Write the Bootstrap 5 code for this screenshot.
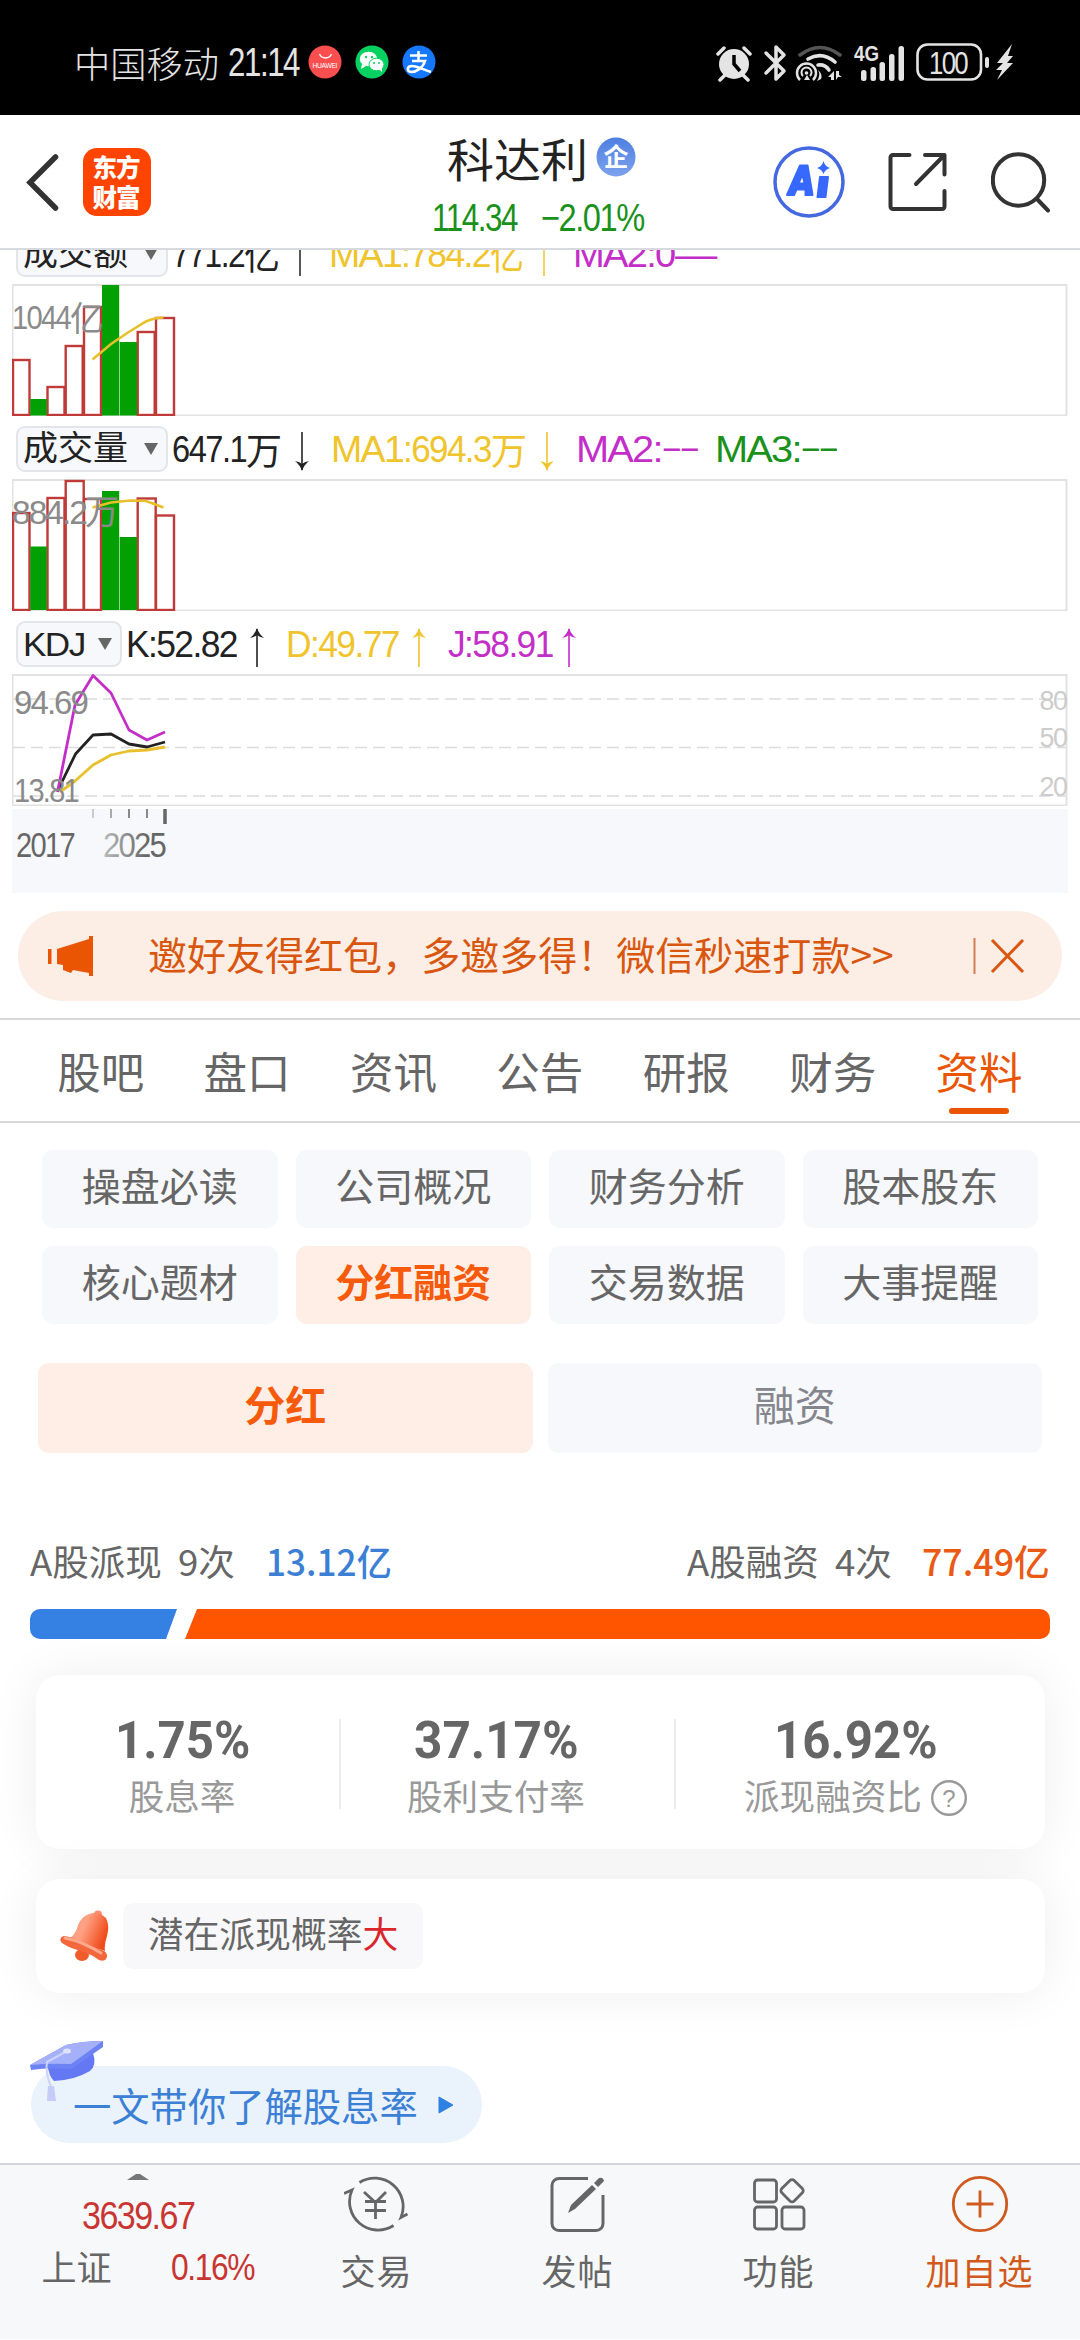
<!DOCTYPE html>
<html lang="zh-CN">
<head>
<meta charset="utf-8">
<meta name="viewport" content="width=device-width, initial-scale=1">
<title>科达利 - 分红融资</title>
<link href="https://cdn.jsdelivr.net/npm/bootstrap@5.3.0/dist/css/bootstrap.min.css" rel="stylesheet">
<style>
:root{--han:"Noto Sans CJK SC",sans-serif;--num:"Liberation Sans","Noto Sans CJK SC",sans-serif;--org:#ea5504}
body{width:1080px;height:2340px;overflow:hidden;background:#fff;font-family:var(--han);color:#666;line-height:1}
svg{display:block;flex:none}
svg text{font-family:var(--num)}
.fit{display:inline-block;white-space:nowrap;flex:none;text-align:left}
.fit>span{display:inline-block;transform-origin:0 50%}
.num{font-family:var(--num)}
.num.fit,.num .fit{letter-spacing:-.045em}
.statusbar{height:115px;background:#000;color:#e4e4e4;padding:9px 66px 0 74px}
.statusbar .carrier{font-size:36px;font-weight:300}
.statusbar .clock{font-size:40px;margin-left:9px}
.apphead{height:135px;border-bottom:2px solid #d6dade;padding:0 27px 0 26px}
.quote{width:220px;padding-top:17px;margin-left:276px}
.quote .stock{font-size:46px;color:#222;height:50px}
.quote .price{font-size:38px;color:#1a911a;height:40px;margin:17px 0 0 5px}
.charts{height:643px;overflow:hidden;padding:0 12px}
.charts .inner{margin-top:-29px}
.indrow{height:63px;padding:10px 0 0 4px;font-size:37px;color:#222}
.indrow>.fit{margin-top:-6px}
.indrow>.arr{margin-top:-2px}
.pick{height:46px;background:#f7f8fb;border:2px solid #e3e5ea;border-radius:9px;font-size:34px;color:#222;padding:0 8px 0 5px;margin:-8px 4px 0 0}
.pick .fit{margin-top:-5px}
.pick i{border:7.5px solid transparent;border-top:12px solid #666;border-bottom:0}
.arr{margin:0 22px 0 13px}
.cy{color:#efc42c}.cm{color:#c42ec8}.cg{color:#1a911a}
.axis{background:#f7f8fb;margin-top:3px}
.notice{height:90px;margin:18px 18px 17px;border-radius:45px;background:#fceee5;color:#d9560f;padding:0 37px 0 29px}
.notice .msg{font-size:38.5px;margin:-5px 0 0 54px}
.tabs{height:105px;border-top:2px solid #d8d8d8;border-bottom:2px solid #d8d8d8;padding:0 27.5px}
.tabs a{font-size:43.5px;color:#666;text-decoration:none;width:146.4px;height:101px;position:relative}
.tabs a.active{color:var(--org)}
.tabs a.active:after{content:"";position:absolute;left:43px;bottom:7px;width:60px;height:6px;border-radius:3px;background:var(--org)}
.tags{display:grid;grid-template-columns:repeat(4,1fr);gap:18px;padding:27px 42px 0}
.tags a,.seg a{background:#f7f8fb;border-radius:11px;height:78px;font-size:39px;color:#666;text-decoration:none;padding-bottom:9px}
.tags a.active,.seg a.active{background:#ffeee5;color:#f65a0a;font-weight:700}
.seg{gap:15px;padding:39px 38px 0}
.seg a{height:90px;font-size:41px;color:#85858d;padding-bottom:10px}
.sum{margin-top:83px;height:48px;padding:0 30px;font-size:36px}
.splitbar{margin:25px 30px 0}
.panel{margin:0 35px 0 36px;border-radius:24px;background:#fff;box-shadow:0 0 50px rgba(0,0,0,.07);position:relative}
.p1{height:174px;margin-top:36px;padding-top:3px}
.stat{height:90px}
.stat+.stat{border-left:2px solid #ececec}
.stat b{font-family:Roboto,sans-serif;font-weight:700;font-size:51px;height:42px;line-height:44px;margin-bottom:14px}
.stat small{font-size:35.6px;color:#999;height:40px;line-height:40px}
.p2{height:114px;margin-top:30px;padding-left:24px}
.chip{background:#f8f8fb;border-radius:10px;height:66px;width:300px;font-size:35.8px;padding-bottom:6px;margin-left:14px}
.chip em{color:#d9262c;font-style:normal}
.learn{height:77px;width:451px;margin:73px 0 0 31px;border-radius:39px;background:#eaf2fc;color:#3b80d5;font-size:38.3px;position:relative;padding:1px 0 0 42px}
.learn .hat{position:absolute;left:-2px;top:-26px}
.learn .tri{margin-left:20px}
.dock{height:176px;border-top:2px solid #d5d5de;background:#f7f8fa;margin-top:20px}
.dock .idx{width:276px;padding-top:8px}
.dock .cell{width:201px;font-size:35px;padding-top:9px}
.dock .cell span{margin-top:16px;line-height:40px;letter-spacing:1px}
.red{color:#c93532}
</style>
</head>
<body class="d-flex flex-column">

<div class="statusbar d-flex align-items-center">
  <span class="fit carrier" data-w="145">中国移动</span>
  <span class="fit num clock" data-w="71">21:14</span>
  <svg class="ms-2 ps-0" width="130" height="36" viewBox="-1 0 130 36">
    <circle cx="17" cy="18" r="16.5" fill="#fb4e4f"/><path d="M11.500 10a6.500 6.500 0 0 0 12 0" fill="none" stroke="#fff" stroke-width="1.300"/>
    <text x="4.500" y="23.500" font-size="6.800" fill="#fff" textLength="25">HUAWEI</text>
    <circle cx="64" cy="18" r="16.500" fill="#07d160"/>
    <ellipse cx="60.500" cy="15" rx="8.700" ry="7.300" fill="#fff"/><path d="M54 20l-1 5 5-3z" fill="#fff"/>
    <ellipse cx="68.500" cy="20.500" rx="7.500" ry="6.300" fill="#fff" stroke="#07d160"/><path d="M71 25l3 3v-4z" fill="#fff"/>
    <g fill="#07d160"><circle cx="58" cy="13" r="1.200"/><circle cx="64" cy="13" r="1.200"/><circle cx="66" cy="19" r="1"/><circle cx="71" cy="19" r="1"/></g>
    <circle cx="111" cy="18" r="16.500" fill="#1677ff"/>
    <path d="M102 11.500h17M110.500 7v10M104 17h13C115 24 108 28 103.500 28c-5 0-5-6 .5-6 5 0 12 4 19 6" fill="none" stroke="#fff" stroke-width="2.600"/>
  </svg>
  <svg class="ms-auto" width="300" height="40" viewBox="713 41 300 40" fill="#e4e4e4" stroke="none">
    <circle cx="733" cy="63" r="15"/><path d="M733 54v9l6 7" stroke="#000" stroke-width="3.500" fill="none"/>
    <path d="M717 53l6-6M743 47l6 6M719 79l5-5M747 79l-5-5" stroke="#e4e4e4" stroke-width="3.500" stroke-linecap="round"/>
    <path d="M765 52l18 18-8 8V46l8 8-18 18" fill="none" stroke="#e4e4e4" stroke-width="3.500" stroke-linejoin="round" stroke-linecap="round"/>
    <g fill="none" stroke="#e4e4e4" stroke-width="3.600"><path d="M799 54q20-15 40 0" stroke="#555" stroke-linecap="round"/><path d="M807 58q14-8 27 3M817 64q7-1 11 5" stroke-linecap="round"/>
    <path d="M799 79a9.500 9.500 0 1 1 13 0" stroke-width="2.500"/><path d="M802 75a5 5 0 1 1 7 0" stroke-width="2"/></g>
    <circle cx="805.500" cy="72" r="1.800"/><path d="M806 74l3 5h-6zM817 69q5 4 3 9l-4 2q4-6 1-11zM827 76l6-6v9h-3v-3zM835 70v9l2-3h4l-3-2v-4z"/>
    <text x="853" y="60" font-size="22" font-weight="700" textLength="25" lengthAdjust="spacingAndGlyphs">4G</text>
    <rect x="860" y="69" width="5.500" height="11" rx="2.500"/><rect x="869.500" y="66" width="5.500" height="14" rx="2.500"/><rect x="878.500" y="61" width="5.500" height="19" rx="2.500"/><rect x="888" y="53" width="5.500" height="27" rx="2.500"/><rect x="897.500" y="45" width="5.500" height="35" rx="2.500"/>
    <rect x="916.500" y="43.500" width="63.500" height="35" rx="10" fill="none" stroke="#e4e4e4" stroke-width="2.600"/><rect x="984" y="56" width="4" height="11" rx="2"/>
    <text x="928" y="72.500" font-size="31" textLength="38" lengthAdjust="spacingAndGlyphs" letter-spacing="-2">100</text>
    <path d="M1011 43l-15 19h6l-7 7h6l-5 10 16-17h-6l6-7h-5z"/>
  </svg>
</div>

<header class="apphead d-flex align-items-center">
  <svg width="34" height="58" viewBox="0 0 34 58"><path d="M29.500 4L4 29.500 29.500 55" fill="none" stroke="#333" stroke-width="5.500" stroke-linecap="round"/></svg>
  <svg style="margin-left:23px" width="68" height="68" viewBox="0 0 68 68"><rect width="68" height="68" rx="14" fill="#ff4400"/>
    <g font-size="24.500" font-weight="900" fill="#fff"><text x="9.500" y="28.500" textLength="48">东方</text><text x="9.500" y="59" textLength="48">财富</text></g></svg>
  <div class="quote align-self-start">
    <div class="stock d-flex align-items-center ms-3 ps-1"><span class="fit" data-w="141">科达利</span>
      <svg class="ms-2" width="40" height="40" viewBox="0 0 40 40"><defs><linearGradient id="qi" x2="0" y2="1"><stop stop-color="#4f7fe3"/><stop offset="1" stop-color="#7da2ec"/></linearGradient></defs><circle cx="20" cy="20" r="19.500" fill="url(#qi)"/><text x="7.500" y="29" font-size="25" font-weight="700" fill="#fff">企</text></svg></div>
    <div class="price num d-flex"><span class="fit" data-w="85">114.34</span><span class="fit" style="margin-left:24px" data-w="103">−2.01%</span></div>
  </div>
  <svg style="margin-left:126px" width="72" height="74" viewBox="0 0 72 74"><circle cx="36" cy="37" r="34" fill="none" stroke="#4368e0" stroke-width="3.500"/>
    <path fill="#3768ff" fill-rule="evenodd" stroke="#3768ff" stroke-width="2" stroke-linejoin="round" d="M27 20.500h7.500L39.500 50h-7v-5.500H23.500L21 50h-7zM29.500 29L25.500 38.500h6zM47 32h8L52.500 52h-8z"/><path d="M50.500 16q1.500 5.500 6.500 7-5 1.500-6.500 6-1.500-4.500-6.500-6 5-1.500 6.500-7z" fill="#3768ff"/></svg>
  <svg style="margin-left:43px" width="60" height="60" viewBox="0 0 60 60" fill="none" stroke="#333" stroke-width="4" stroke-linecap="round" stroke-linejoin="round"><path d="M21.500 3H5a2.500 2.500 0 0 0-2.500 2.500v49A2.500 2.500 0 0 0 5 57h49a2.500 2.500 0 0 0 2.500-2.500V39M37 3h19.500v19.500M55.500 4L28 32"/></svg>
  <svg class="ms-auto" width="62" height="62" viewBox="0 0 62 62" fill="none" stroke="#333" stroke-width="4" stroke-linecap="round"><circle cx="27.500" cy="29" r="25.700"/><path d="M46 48l11 11.500"/></svg>
</header>

<section class="charts"><div class="inner">
  <div class="indrow d-flex align-items-center">
    <div class="pick d-flex align-items-center"><span class="fit" data-w="105">成交额</span><i class="ms-3"></i></div>
    <span class="fit num" data-w="72">771.2</span><span class="fit" data-w="36">亿</span>
    <svg class="arr" width="14" height="40" viewBox="0 0 14 40"><path d="M7 1v38M0 11q6-4 7-10 1 6 7 10" fill="none" stroke="#222" stroke-width="1.500"/></svg>
    <span class="fit num cy" data-w="72">MA1</span><span class="fit num cy" data-w="89">:784.2</span><span class="fit cy" data-w="34">亿</span>
    <svg class="arr" width="14" height="40" viewBox="0 0 14 40"><path d="M7 1v38" stroke="#efc42c" stroke-width="1.500"/></svg>
    <span class="fit num cm" data-w="102">MA2:0</span><span class="fit num cm" data-w="40">—</span>
  </div>
  <svg width="1056" height="132" viewBox="12 284 1056 132">
    <rect x="12.500" y="285" width="1054" height="130.500" fill="none" stroke="#e2e2e2" stroke-width="2"/>
    <g fill="#fff" stroke="#bf3a38" stroke-width="2.400"><rect x="13" y="360" width="16.500" height="55"/><rect x="47.500" y="387" width="17" height="28"/><rect x="65.700" y="346" width="17" height="69"/><rect x="84" y="307" width="17" height="108"/><rect x="137.700" y="332" width="17" height="83"/><rect x="156" y="318" width="18" height="97"/></g>
    <g fill="#03a003"><rect x="30.300" y="399" width="16.500" height="16.500"/><rect x="102" y="285" width="17.200" height="130.500"/><rect x="119.700" y="342" width="17.300" height="73.500"/></g>
    <path d="M92.500 359.500L111 344 128 332.500 146 321.500Q155 317.500 163.500 317.500" fill="none" stroke="#e8c02c" stroke-width="2.600"/>
    <g fill="#8a8a8a"><text x="12" y="329" font-size="34" textLength="58" lengthAdjust="spacingAndGlyphs" letter-spacing="-2">1044</text><text x="70" y="331" font-size="34">亿</text></g>
  </svg>
  <div class="indrow d-flex align-items-center">
    <div class="pick d-flex align-items-center"><span class="fit" data-w="105">成交量</span><i class="ms-3"></i></div>
    <span class="fit num" data-w="74">647.1</span><span class="fit" data-w="36">万</span>
    <svg class="arr" width="14" height="40" viewBox="0 0 14 40"><path d="M7 0v38" stroke="#222" stroke-width="1.600"/><path d="M0 29q5 1 7 3 2-2 7-3-5 4-7 10-2-6-7-10z" fill="#222"/></svg>
    <span class="fit num cy" data-w="72">MA1</span><span class="fit num cy" data-w="88">:694.3</span><span class="fit cy" data-w="36">万</span>
    <svg class="arr" width="14" height="40" viewBox="0 0 14 40"><path d="M7 0v38" stroke="#efc42c" stroke-width="1.600"/><path d="M0 29q5 1 7 3 2-2 7-3-5 4-7 10-2-6-7-10z" fill="#efc42c"/></svg>
    <span class="fit num cm" data-w="86">MA2:</span><span class="fit num cm" data-w="36">−−</span>
    <span class="fit num cg" style="margin-left:17px" data-w="86">MA3:</span><span class="fit num cg" data-w="36">−−</span>
  </div>
  <svg width="1056" height="132" viewBox="12 479 1056 132">
    <rect x="12.500" y="480" width="1054" height="130.500" fill="none" stroke="#e2e2e2" stroke-width="2"/>
    <g fill="#fff" stroke="#bf3a38" stroke-width="2.400"><rect x="13" y="513" width="16.500" height="97"/><rect x="47.500" y="498" width="17" height="112"/><rect x="65.700" y="481" width="18" height="129"/><rect x="84" y="499" width="17" height="111"/><rect x="137.700" y="498.500" width="18" height="111.500"/><rect x="156" y="515.500" width="18" height="94.500"/></g>
    <g fill="#03a003"><rect x="30.300" y="546.500" width="16.500" height="63.500"/><rect x="102" y="491" width="17.200" height="119"/><rect x="119.700" y="537" width="17.300" height="73"/></g>
    <path d="M92.500 507.500L111 502.500 130 500.500 146 501 163.500 507.500" fill="none" stroke="#e8c02c" stroke-width="2.600"/>
    <g fill="#8a8a8a"><text x="12" y="523.500" font-size="34" textLength="74" lengthAdjust="spacingAndGlyphs" letter-spacing="-2">884.2</text><text x="85" y="524" font-size="34">万</text></g>
  </svg>
  <div class="indrow d-flex align-items-center">
    <div class="pick d-flex align-items-center"><span class="fit num mt-0" data-w="62">KDJ</span><i style="margin-left:13px"></i></div>
    <span class="fit num" data-w="111">K:52.82</span>
    <svg class="arr" width="14" height="40" viewBox="0 0 14 40"><path d="M7 2v38" stroke="#222" stroke-width="1.600"/><path d="M0 11q5-1 7-3 2 2 7 3-5-4-7-10-2 6-7 10z" fill="#222"/></svg>
    <span class="fit num cy" data-w="113">D:49.77</span>
    <svg class="arr" width="14" height="40" viewBox="0 0 14 40"><path d="M7 2v38" stroke="#efc42c" stroke-width="1.600"/><path d="M0 11q5-1 7-3 2 2 7 3-5-4-7-10-2 6-7 10z" fill="#efc42c"/></svg>
    <span class="fit num cm" data-w="105">J:58.91</span>
    <svg class="arr" width="14" height="40" viewBox="0 0 14 40" style="margin-left:9px"><path d="M7 2v38" stroke="#c42ec8" stroke-width="1.600"/><path d="M0 11q5-1 7-3 2 2 7 3-5-4-7-10-2 6-7 10z" fill="#c42ec8"/></svg>
  </div>
  <svg width="1056" height="132" viewBox="12 674 1056 132">
    <rect x="12.500" y="675" width="1054" height="130.500" fill="none" stroke="#e2e2e2" stroke-width="2"/>
    <path d="M13 699h1053M13 747.500h1053M13 796h1053" stroke="#dcdcdc" stroke-width="1.600" stroke-dasharray="12 6"/>
    <g fill="none" stroke-width="2.800" stroke-linejoin="round"><path d="M60 792L75 781 93 765 111 755 129 751 147 750 165 747" stroke="#e8c02c"/><path d="M58 790L75.500 754 93 735 111 734 129 744 147 747 165 742" stroke="#222"/><path d="M57.500 792L75 705 93 675.500 111 693 129 730 147 740 165 732" stroke="#c42ec8"/></g>
    <g font-size="34" fill="#8a8a8a" letter-spacing="-2"><text x="14" y="714" textLength="73" lengthAdjust="spacingAndGlyphs">94.69</text><text x="14" y="802" textLength="64" lengthAdjust="spacingAndGlyphs">13.81</text></g>
    <g font-size="28" fill="#ccc" letter-spacing="-1.500"><text x="1039.500" y="710" textLength="27" lengthAdjust="spacingAndGlyphs">80</text><text x="1039.500" y="747" textLength="27" lengthAdjust="spacingAndGlyphs">50</text><text x="1039.500" y="796" textLength="27" lengthAdjust="spacingAndGlyphs">20</text></g>
  </svg>
  <svg class="axis" width="1056" height="84" viewBox="12 809 1056 84">
    <defs><linearGradient id="yr"><stop stop-color="#bbb"/><stop offset=".7" stop-color="#666"/></linearGradient></defs>
    <path d="M93 809v9" stroke="#ccc" stroke-width="2"/><path d="M111 809v9" stroke="#aaa" stroke-width="2"/><path d="M129 809v9M147 809v9" stroke="#888" stroke-width="2"/><path d="M165 809v15" stroke="#666" stroke-width="3.500"/>
    <g font-size="35" letter-spacing="-2"><text x="16" y="857" fill="#666" textLength="58" lengthAdjust="spacingAndGlyphs">2017</text><text x="103" y="857" fill="url(#yr)" textLength="62" lengthAdjust="spacingAndGlyphs">2025</text></g>
  </svg>
</div></section>

<div class="notice d-flex align-items-center">
  <svg width="47" height="40" viewBox="0 0 47 40" fill="#ea5504"><rect x="1" y="13" width="3.500" height="15"/><path d="M10 13L42 3V0h4v40h-4v-3l-16-3-2 3-8-3v-5L10 28z"/></svg>
  <span class="fit msg" data-w="746">邀好友得红包，多邀多得！微信秒速打款&gt;&gt;</span>
  <svg class="ms-auto" width="52" height="38" viewBox="0 0 52 38"><path d="M1.500 1v36" stroke="#d08050" stroke-width="2"/><path d="M19 3l31 32M50 3L19 35" stroke="#d9560f" stroke-width="3"/></svg>
</div>

<nav class="tabs nav flex-nowrap">
  <a class="d-flex align-items-center justify-content-center" href="#">股吧</a><a class="d-flex align-items-center justify-content-center" href="#">盘口</a><a class="d-flex align-items-center justify-content-center" href="#">资讯</a><a class="d-flex align-items-center justify-content-center" href="#">公告</a><a class="d-flex align-items-center justify-content-center" href="#">研报</a><a class="d-flex align-items-center justify-content-center" href="#">财务</a><a class="active d-flex align-items-center justify-content-center" href="#">资料</a>
</nav>

<div class="tags text-center">
  <a class="d-flex align-items-center justify-content-center" href="#">操盘必读</a><a class="d-flex align-items-center justify-content-center" href="#">公司概况</a><a class="d-flex align-items-center justify-content-center" href="#">财务分析</a><a class="d-flex align-items-center justify-content-center" href="#">股本股东</a>
  <a class="d-flex align-items-center justify-content-center" href="#">核心题材</a><a class="active d-flex align-items-center justify-content-center" href="#">分红融资</a><a class="d-flex align-items-center justify-content-center" href="#">交易数据</a><a class="d-flex align-items-center justify-content-center" href="#">大事提醒</a>
</div>
<div class="seg d-flex">
  <a class="active flex-fill d-flex align-items-center justify-content-center" href="#">分红</a><a class="flex-fill d-flex align-items-center justify-content-center" href="#">融资</a>
</div>

<div class="sum d-flex align-items-center">
  <span class="fit" data-w="132">A股派现</span><span class="fit ms-3" data-w="57">9次</span><span class="fit fw-medium" style="margin-left:31px;color:#3b80d5" data-w="126">13.12亿</span>
  <span class="fit ms-auto" data-w="132">A股融资</span><span class="fit ms-3" data-w="57">4次</span><span class="fit fw-medium" style="margin-left:30px;color:#ea5a14" data-w="128">77.49亿</span>
</div>
<svg class="splitbar" width="1020" height="30" viewBox="0 0 1020 30"><path d="M10 0h137l-11 30H10A10 10 0 0 1 0 20V10A10 10 0 0 1 10 0z" fill="#3480e3"/><path d="M167 0h843a10 10 0 0 1 10 10v10a10 10 0 0 1-10 10H155z" fill="#ff5500"/></svg>

<div class="panel p1 d-flex align-items-center">
  <div class="stat d-flex flex-column align-items-center" style="width:303px;padding-right:11px"><b class="fit" data-w="135">1.75%</b><small>股息率</small></div>
  <div class="stat d-flex flex-column align-items-center" style="width:335px;padding-right:23px"><b class="fit" data-w="165">37.17%</b><small>股利支付率</small></div>
  <div class="stat d-flex flex-column align-items-center" style="width:371px;padding-right:9px"><b class="fit" data-w="164">16.92%</b>
    <small class="d-flex align-items-center">派现融资比<svg style="margin:5px 0 0 8px" width="38" height="38" viewBox="0 0 38 38"><circle cx="19" cy="20" r="16.800" fill="none" stroke="#999" stroke-width="2.400"/><text x="12.300" y="28.500" font-size="24" fill="#999">?</text></svg></small></div>
</div>

<div class="panel p2 d-flex align-items-center">
  <svg width="49" height="52" viewBox="0 0 49 52"><defs><linearGradient id="be" x1="0" x2="1" y2=".4"><stop stop-color="#ff9c7c"/><stop offset=".45" stop-color="#ffa184"/><stop offset="1" stop-color="#f04d1c"/></linearGradient></defs>
    <circle cx="38" cy="4.500" r="4" fill="#f98d6b"/><ellipse cx="22" cy="45" rx="7" ry="6" fill="#ef5b2b"/><path d="M29 4Q38 1 46 8q4 7 1 18-3 9-2 15L9 29q7-5 9-14 3-8 11-11z" fill="url(#be)"/><path d="M4 26q9 1 20 7l20 8q5 3 2 8-2 3-7 1-8-6-18-9Q6 37 1 32q-2-5 3-6z" fill="#f4673a"/><path d="M5 28q16 3 36 15" stroke="#ffa88c" stroke-width="3" fill="none" stroke-linecap="round"/></svg>
  <div class="chip d-flex align-items-center justify-content-center">潜在派现概率<em>大</em></div>
</div>

<div class="learn d-flex align-items-center">
  <svg class="hat" width="76" height="62" viewBox="0 0 76 62"><path d="M18 23l46-10q4 12-3 18-15 9-36 10-5-4-7-18z" fill="#6478f4"/><path d="M1 25L37 5Q54 1 74 1v6L42 29Q20 27 2 30z" fill="#6e83f3"/><path d="M1 25L37 5Q54 1 74 1L42 24Q20 23 1 25z" fill="#a5b0fa"/><path d="M38 11L18 22q-2 10 4 25" fill="none" stroke="#ccd3ff" stroke-width="2"/><ellipse cx="38" cy="11" rx="4" ry="2.500" fill="#dfe3ff"/><path d="M19 46h6l2 15h-9z" fill="#c5ccf8"/></svg>
  <span>一文带你了解股息率</span><svg class="tri" width="16" height="18" viewBox="0 0 16 18"><path d="M1 1l14 8-14 8z" fill="#2f80e3" stroke="#2f80e3" stroke-linejoin="round"/></svg>
</div>

<footer class="dock d-flex">
  <div class="idx d-flex flex-column align-items-center num red">
    <svg width="22" height="7" viewBox="0 0 22 7"><path d="M0 7L9 1h4l9 6z" fill="#777"/></svg>
    <span class="fit" style="font-size:38px;margin-top:17px" data-w="112">3639.67</span>
    <div class="d-flex align-items-center" style="margin:10px 0 0 19px"><span style="font-size:35px;color:#666;font-family:var(--han)">上证</span><span class="fit" style="font-size:36px;margin:5px 0 0 59px" data-w="83">0.16%</span></div>
  </div>
  <div class="cell d-flex flex-column align-items-center">
    <svg width="66" height="60" viewBox="344 2174 66 60" fill="none" stroke="#666" stroke-width="2.800"><path d="M359.500 2182.500A28.500 28.500 0 0 1 401 2217.500l6.500-3.500M393.500 2225.500A28.500 28.500 0 0 1 352 2190l-8 3.500M364 2192l11.500 10.500L386 2192M375.500 2202v17M365 2201.500h21M365 2210.500h21"/></svg><span>交易</span></div>
  <div class="cell d-flex flex-column align-items-center">
    <svg width="60" height="60" viewBox="548 2174 60 60"><path d="M588 2178.500h-29a7 7 0 0 0-7 7v38a7 7 0 0 0 7 7h37a7 7 0 0 0 7-7V2195" fill="none" stroke="#666" stroke-width="3"/><path d="M568 2213l3-8 21-20 4 4-21 20zM594 2183l5-5q4-1 5 3l-6 6z" fill="#666"/></svg><span>发帖</span></div>
  <div class="cell d-flex flex-column align-items-center">
    <svg width="60" height="60" viewBox="748.500 2174 60 60" fill="none" stroke="#666" stroke-width="2.800"><rect x="754" y="2180" width="22" height="22" rx="3"/><rect x="754" y="2207" width="22" height="22" rx="3"/><rect x="781.500" y="2207" width="22" height="22" rx="3"/><rect x="783" y="2182" width="17.500" height="17.500" rx="3" transform="rotate(45 791.700 2190.500)"/></svg><span>功能</span></div>
  <div class="cell d-flex flex-column align-items-center" style="color:#d2591c">
    <svg width="60" height="60" viewBox="0 0 60 60" fill="none" stroke="#cf5a20" stroke-width="2.800"><circle cx="30" cy="30" r="26.700"/><path d="M30 16.500v27M16.500 30h27"/></svg><span>加自选</span></div>
</footer>

<script>
// Squeezes or stretches each .fit label to the advance width in data-w.
document.querySelectorAll('.fit').forEach(function(el){
  var s=document.createElement('span');
  while(el.firstChild)s.appendChild(el.firstChild);
  el.appendChild(s);
  var w=parseFloat(el.dataset.w);
  s.style.transform='scaleX('+(w/s.offsetWidth)+')';
  el.style.width=w+'px';
});
</script>
<script src="https://cdn.jsdelivr.net/npm/bootstrap@5.3.0/dist/js/bootstrap.bundle.min.js"></script>
</body>
</html>
